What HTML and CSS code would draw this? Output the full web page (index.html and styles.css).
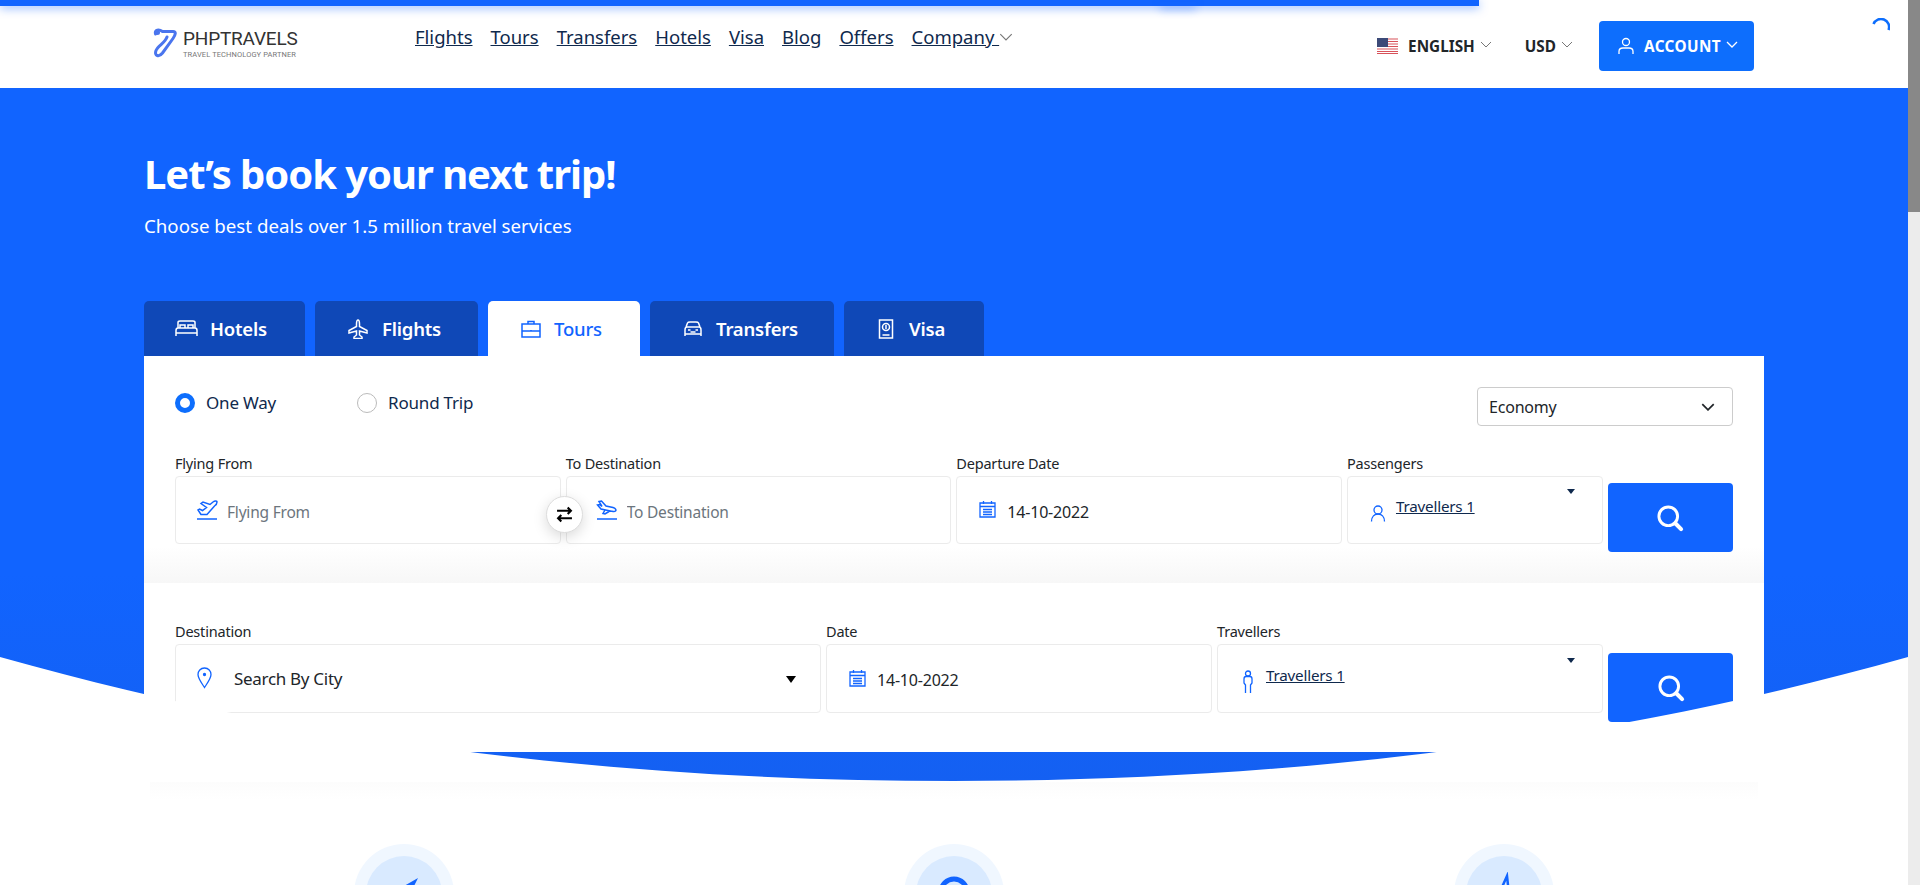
FILE: index.html
```html
<!DOCTYPE html>
<html lang="en">
<head>
  <meta charset="UTF-8" />
  <meta name="viewport" content="width=device-width, initial-scale=1.0"/>
  <title>PHPTRAVELS</title>
  <link rel="stylesheet" href="styles.css">
</head>
<body>

<div class="page">
  <div class="top-line"></div>

  <!-- Header -->
  <header class="site-header">
    <a class="logo" href="#">
      <svg class="logo-mark" viewBox="0 0 24 30"><path d="M2.500 6C1.500 1.500 6 1 9.500 3.500L20 3.500C23.500 3.500 22.500 7 20 10.500L9.500 25C6 29.500 1 28 3 22.500C5 17.500 12 15 14 9" fill="none" stroke="#4a75ee" stroke-width="3" stroke-linecap="round"/><circle cx="4.500" cy="4.500" r="2.500" fill="#4a75ee"/></svg>
      <span class="logo-text">
        <span class="logo-name">PHPTRAVELS</span>
        <span class="logo-sub">TRAVEL TECHNOLOGY PARTNER</span>
      </span>
    </a>

    <nav class="main-nav">
      <a href="#">Flights</a>
      <a href="#">Tours</a>
      <a href="#">Transfers</a>
      <a href="#">Hotels</a>
      <a href="#">Visa</a>
      <a href="#">Blog</a>
      <a href="#">Offers</a>
      <span class="nav-drop"><a href="#">Company&nbsp;</a><svg class="chev" viewBox="0 0 12 7"><path d="M1 1l5 5 5-5"/></svg></span>
    </nav>

    <div class="header-right">
      <div class="drop drop-lang">
        <svg class="flag" viewBox="0 0 21 16">
          <rect width="21" height="16" fill="#fff"/>
          <path d="M0 1h21M0 3.500h21M0 6h21M0 8.500h21M0 11h21M0 13.500h21M0 15.500h21" stroke="#d8525a" stroke-width="1.200"/>
          <rect width="11" height="9" fill="#3c4a78"/>
        </svg>
        <span>ENGLISH</span>
        <svg class="chev" viewBox="0 0 12 7"><path d="M1 1l5 5 5-5"/></svg>
      </div>
      <div class="drop drop-cur">
        <span>USD</span>
        <svg class="chev" viewBox="0 0 12 7"><path d="M1 1l5 5 5-5"/></svg>
      </div>
      <button class="account-btn">
        <svg class="account-icon" viewBox="0 0 16 18"><circle cx="8" cy="5" r="3.500"/><path d="M1 17v-2.500C1 12 3 11 5 11h6c2 0 4 1 4 3.500V17"/></svg>
        <span>ACCOUNT</span>
        <svg class="chev" viewBox="0 0 12 7"><path d="M1 1l5 5 5-5"/></svg>
      </button>
    </div>

    <svg class="spinner" viewBox="0 0 18 13"><path d="M1.500 6A8 8 0 0 1 16.500 12"/></svg>
  </header>

  <!-- Hero and search -->
  <section class="hero">
    <h1>Let’s book your next trip!</h1>
    <p class="hero-sub">Choose best deals over 1.5 million travel services</p>

    <div class="tabs">
      <a class="tab tab-hotels" href="#">
        <svg viewBox="0 0 23 17"><path d="M3 8V2.500C3 1.500 4 1 5 1h13c1 0 2 .5 2 1.500V8M1 16v-5.500C1 9 2 8 3 8h17c1 0 2 1 2 2.500V16M1 13h21M5 8V5h5v3M13 8V5h5v3"/></svg>
        Hotels
      </a>
      <a class="tab tab-flights" href="#">
        <svg viewBox="0 0 20 20"><path d="M10 1c1 0 1.500 2 1.500 4v2.500L19 11.500V14l-7.500-2v4l2.500 2v1.500H6V18l2.500-2v-4L1 14v-2.500L8.500 7.500V5C8.500 3 9 1 10 1z"/></svg>
        Flights
      </a>
      <a class="tab tab-tours active" href="#">
        <svg viewBox="0 0 20 18"><path d="M1 4h18v13H1zM1 11h18M7 4V1.500h6V4M10 10v1.500"/></svg>
        Tours
      </a>
      <a class="tab tab-transfers" href="#">
        <svg viewBox="0 0 20 16"><path d="M3 6l1.500-4C5 1 6 1 7 1h6c1 0 2 0 2.500 1L17 6M2 15v-6c0-2 1-3 2-3h12c1 0 2 1 2 3v6M2 13h16M5 9h2.500M12.500 9H15M7.500 11h5"/></svg>
        Transfers
      </a>
      <a class="tab tab-visa" href="#">
        <svg viewBox="0 0 15 20"><path d="M1 1h13v18H1zM4 16h7"/><circle cx="7.500" cy="8" r="3.500"/><path d="M7.500 6v4"/></svg>
        Visa
      </a>
    </div>

    <div class="search-card">
      <div class="panel panel-flights">
        <div class="trip-row">
          <div class="radios">
            <label class="radio"><span class="radio-dot checked"></span>One Way</label>
            <label class="radio"><span class="radio-dot"></span>Round Trip</label>
          </div>
          <div class="cabin-select">
            <span>Economy</span>
            <svg viewBox="0 0 12 7"><path d="M1 1l5 5 5-5"/></svg>
          </div>
        </div>

        <div class="field-row flights-row">
          <div class="field">
            <label>Flying From</label>
            <div class="box">
              <svg class="ico ico-plane" viewBox="0 0 22 20"><path d="M1 19h20M5 14.500L2 10l1.500-1 3 1.500 4-3L5 3.500 7 2l7 2.500 3-2.500c1.500-1 4-1.500 4 0s-1 3-2.500 4L11 14.500z"/></svg>
              <input type="text" placeholder="Flying From">
            </div>
            <button class="swap"><svg viewBox="0 0 16 16"><path d="M1 4.500h13M11 1.500l3 3-3 3" /><path d="M15 11.500H2M5 8.500l-3 3 3 3"/></svg></button>
          </div>
          <div class="field">
            <label>To Destination</label>
            <div class="box box-to">
              <svg class="ico ico-plane" viewBox="0 0 22 20"><path d="M1 19h20M3 1.500L5.500 1 10 6l7 1.500c2.500.8 3.500 2.500 2.500 3.500s-2.500.5-4 .2L5 9 1.500 5l2-.5L6 6.500zM9 10l-2 3.500L9 14l4-2.500"/></svg>
              <input type="text" placeholder="To Destination">
            </div>
          </div>
          <div class="field">
            <label>Departure Date</label>
            <div class="box box-date">
              <svg class="ico ico-cal" viewBox="0 0 17 18"><path d="M1 3h15v14H1zM1 6.500h15M4.500 1v3M12.500 1v3M4 9.500h9M4 12h9M4 14.500h9" /></svg>
              <span class="value">14-10-2022</span>
            </div>
          </div>
          <div class="field">
            <label>Passengers</label>
            <div class="box box-pax">
              <svg class="ico ico-user" viewBox="0 0 16 18"><circle cx="8" cy="6" r="4"/><path d="M1.500 17.500c0-5 3-7.500 6.500-7.500s6.500 2.500 6.500 7.500"/></svg>
              <a class="pax-link" href="#">Travellers 1</a>
              <span class="caret caret-small"></span>
            </div>
          </div>
          <button class="search-btn"><svg viewBox="0 0 24 24"><circle cx="10.500" cy="10.500" r="8"/><path d="M16.500 16.500l5 5" stroke-width="3.500" stroke-linecap="round"/></svg></button>
        </div>
      </div>

      <div class="panel panel-tours">
        <div class="field-row tours-row">
          <div class="field">
            <label>Destination</label>
            <div class="box box-city">
              <svg class="ico ico-pin" viewBox="0 0 15 22"><path d="M7.500 1C3.500 1 1 4 1 7.500c0 4 4 9 6.500 13 2.500-4 6.500-9 6.500-13C14 4 11.500 1 7.500 1z"/><circle cx="7.500" cy="7.500" r="1" fill="#1164ff"/></svg>
              <span class="city">Search By City</span>
              <span class="caret"></span>
            </div>
          </div>
          <div class="field">
            <label>Date</label>
            <div class="box box-date">
              <svg class="ico ico-cal" viewBox="0 0 17 18"><path d="M1 3h15v14H1zM1 6.500h15M4.500 1v3M12.500 1v3M4 9.500h9M4 12h9M4 14.500h9" /></svg>
              <span class="value">14-10-2022</span>
            </div>
          </div>
          <div class="field">
            <label>Travellers</label>
            <div class="box box-pax box-trav">
              <svg class="ico ico-person" viewBox="0 0 12 24"><circle cx="6" cy="3.500" r="2.500"/><path d="M3.500 23V15L2 13V9c0-1.500 1-2.500 2-2.500h4c1 0 2 1 2 2.500v4l-1.500 2v8"/></svg>
              <a class="pax-link" href="#">Travellers 1</a>
              <span class="caret caret-small"></span>
            </div>
          </div>
          <button class="search-btn"><svg viewBox="0 0 24 24"><circle cx="10.500" cy="10.500" r="8"/><path d="M16.500 16.500l5 5" stroke-width="3.500" stroke-linecap="round"/></svg></button>
        </div>
      </div>
    </div>

    <svg class="hero-curve" viewBox="0 0 1908 125" preserveAspectRatio="none"><path d="M0 0C318 90 636 124 954 124S1590 90 1908 0V125H0z" fill="#fff"/></svg>
  </section>

  <div class="curve-shadow"></div>

  <!-- Features -->
  <section class="features">
    <div class="feature">
      <div class="circle"><div class="circle-in">
        <svg class="feat-ico" viewBox="0 0 40 40"><path d="M34 6L6 22l10 2 3 12z" fill="#1164ff"/></svg>
      </div></div>
    </div>
    <div class="feature">
      <div class="circle"><div class="circle-in">
        <svg class="feat-ico" viewBox="0 0 40 40"><circle cx="20" cy="20" r="13" fill="none" stroke="#1164ff" stroke-width="5"/></svg>
      </div></div>
    </div>
    <div class="feature">
      <div class="circle"><div class="circle-in">
        <svg class="feat-ico" viewBox="0 0 40 40"><path d="M23 4L15 22l2 12h6l2-12z" fill="none" stroke="#1164ff" stroke-width="2.500"/></svg>
      </div></div>
    </div>
  </section>
</div>

<div class="scrollbar"><div class="scroll-thumb"></div></div>

</body>
</html>
```

FILE: styles.css
```css
* { box-sizing: border-box; margin: 0; padding: 0; }
html, body { height: 885px; overflow: hidden; }
body { display: flex; font-family: 'Noto Sans', 'Open Sans', sans-serif; background: #fff; color: #0f294d; }

a { color: inherit; }
svg { display: block; }

.page { position: relative; flex: 1; min-width: 0; height: 885px; overflow: hidden; }
.scrollbar { width: 12px; background: #ececec; }
.scroll-thumb { height: 212px; background: #888; }

.top-line { position: absolute; top: 0; left: 0; width: 1479px; height: 6px; background: #1164ff; box-shadow: 0 2px 10px rgba(17,100,255,0.5); z-index: 5; }
.top-line::after { content: ""; position: absolute; top: 2px; left: 1160px; width: 36px; height: 4px; box-shadow: 0 3px 8px rgba(17,100,255,0.45); }

/* Header */
.site-header { position: relative; display: flex; height: 88px; padding-left: 153px; background: #fff; }

.logo { display: flex; width: 145px; height: 30px; margin-top: 28px; color: #333; text-decoration: none; font-family: Roboto, sans-serif; }
.logo-mark { width: 24px; height: 30px; margin-right: 6px; flex: none; }
.logo-text { display: flex; flex-direction: column; }
.logo-name { font-size: 19px; line-height: 21px; letter-spacing: -0.2px; white-space: nowrap; }
.logo-sub { margin-top: 1px; font-size: 7.500px; line-height: 9px; color: #777; white-space: nowrap; letter-spacing: 0.1px; }

.main-nav { display: flex; gap: 18px; margin-left: 117px; margin-top: 24px; height: 26px; font-size: 18.500px; line-height: 26px; }
.nav-drop { display: flex; align-items: center; }
.chev { width: 12px; height: 7px; fill: none; stroke: #777; stroke-width: 1; }
.nav-drop .chev { margin-left: 0; width: 14px; height: 8px; }

.header-right { display: flex; align-items: center; height: 50px; margin: 21px 154px 0 auto; font-size: 15.300px; font-weight: 700; color: #212529; }
.drop { display: flex; align-items: center; }
.drop .chev { margin-left: 5px; margin-top: -3px; }
.drop-lang { margin-right: 33px; }
.drop-cur { margin-right: 26px; }
.flag { width: 21px; height: 16px; margin-right: 10px; }
.account-btn { display: flex; align-items: center; width: 155px; height: 50px; padding-left: 19px; background: #0d6efd; color: #fff; border: none; border-radius: 4px; font: inherit; letter-spacing: 0.4px; cursor: pointer; }
.account-icon { width: 16px; height: 18px; margin-right: 10px; fill: none; stroke: #fff; stroke-width: 1.300; }
.account-btn .chev { margin-left: 5px; margin-top: -3px; stroke: #fff; stroke-width: 1.300; }

.spinner { position: absolute; top: 18px; right: 18px; width: 18px; height: 13px; fill: none; stroke: #0d6efd; stroke-width: 2.500; }

/* Hero */
.hero { position: relative; height: 694px; padding: 0 144px; background: linear-gradient(#1164ff 70%, #1460f2); color: #fff; }
.hero h1 { padding-top: 58px; font-size: 40px; line-height: 56px; font-weight: 700; letter-spacing: -1.050px; }
.hero-sub { margin-top: 11px; font-size: 18.700px; line-height: 26px; }

.tabs { display: flex; gap: 10px; height: 55px; margin-top: 62px; }
.tab { display: flex; align-items: center; padding: 0 31px; background: #0f48b7; color: #fff; border-radius: 5px 5px 0 0; font-size: 18.500px; font-weight: 600; text-decoration: none; letter-spacing: -0.2px; }
.tab svg { height: 20px; margin-right: 12px; fill: none; stroke: #fff; stroke-width: 1.500; }
.tab.active { background: #fff; color: #1164ff; font-weight: 500; }
.tab.active svg { stroke: #1164ff; }
.tab-hotels { width: 161px; }
.tab-hotels svg { width: 23px; height: 17px; }
.tab-flights { width: 163px; padding-left: 33px; }
.tab-flights svg { width: 20px; margin-right: 14px; }
.tab-tours { width: 152px; padding-left: 33px; }
.tab-tours svg { width: 20px; height: 18px; margin-right: 13px; }
.tab-transfers { width: 184px; padding-left: 33px; }
.tab-transfers svg { width: 20px; height: 16px; margin-right: 13px; }
.tab-visa { width: 140px; padding-left: 34px; }
.tab-visa svg { width: 16px; margin-right: 15px; }

/* Search card */
.search-card { color: #0f294d; }
.panel { padding: 31px 31px 0; }
.panel-flights { height: 227px; background: linear-gradient(#fff 84%, #f7f7f7); }
.panel-tours { height: 169px; padding-top: 38px; background: #fff; }

.trip-row { display: flex; justify-content: space-between; height: 39px; margin-bottom: 27px; }
.radios { display: flex; gap: 81px; padding-top: 6px; }
.radio { display: flex; align-items: center; height: 19px; font-size: 17px; letter-spacing: -0.2px; }
.radio-dot { width: 20px; height: 20px; margin-right: 11px; border: 1px solid #bbb; border-radius: 50%; background: #fff; }
.radio-dot.checked { border: 5.500px solid #0d6efd; }

.cabin-select { display: flex; align-items: center; justify-content: space-between; width: 256px; padding: 0 17px 0 11px; border: 1px solid #ccc; border-radius: 4px; font-size: 16px; color: #212529; letter-spacing: -0.2px; }
.cabin-select svg { width: 14px; height: 8px; fill: none; stroke: #212529; stroke-width: 1.500; }

.field-row { display: grid; gap: 5px; }
.flights-row { grid-template-columns: 1fr 1fr 1fr 256px 125px; }
.tours-row { grid-template-columns: 1fr 386px 386px 125px; }

.field { position: relative; min-width: 0; }
.field label { display: block; height: 23px; font-size: 14.500px; line-height: 20px; letter-spacing: -0.2px; color: #212529; }
.box { display: flex; align-items: center; height: 68px; padding-left: 20px; background: #fff; border: 1px solid #ebebeb; border-radius: 4px; }
.tours-row .box { height: 69px; }
.box input { flex: 1; min-width: 0; margin-top: 3px; border: none; outline: none; background: transparent; font: inherit; font-size: 15.500px; letter-spacing: -0.2px; }
.box input::placeholder { color: #6c757d; opacity: 1; }
.value { margin-top: 3px; font-size: 16px; letter-spacing: -0.2px; color: #212529; }

.ico { flex: none; margin-right: 9px; fill: none; stroke: #1164ff; stroke-width: 1.300; }
.ico-plane { width: 22px; height: 20px; stroke-width: 1.500; }
.ico-cal { width: 17px; height: 18px; margin-right: 11px; margin-top: -2px; }
.box-date { padding-left: 22px; }
.ico-user { width: 16px; height: 18px; margin-top: 6px; margin-right: 10px; }
.ico-pin { width: 15px; height: 22px; margin-right: 22px; margin-left: 1px; margin-top: -1px; }
.ico-person { width: 12px; height: 24px; margin-right: 12px; margin-left: 4px; margin-top: 6px; }
.box-to { padding-left: 29px; }
.box-pax { position: relative; padding-left: 22px; }
.box-city { position: relative; }
.pax-link { align-self: flex-start; margin-top: 18px; font-size: 15.200px; letter-spacing: -0.2px; line-height: 22px; }
.box-trav { padding-left: 20px; }
.box-trav .pax-link { margin-top: 19px; }
.city { font-size: 17px; letter-spacing: -0.3px; color: #212529; }

.caret { position: absolute; right: 23px; top: 32px; border-left: 6px solid transparent; border-right: 6px solid transparent; border-top: 7px solid #000; }
.box-city { padding-right: 30px; }
.box-city .caret { right: 24px; top: 31px; border-left-width: 5px; border-right-width: 5px; }
.caret-small { top: 12px; right: 27px; border-left-width: 4px; border-right-width: 4px; border-top-width: 5px; border-top-color: #0f294d; }
.box-trav .caret-small { top: 13px; }

.swap { position: absolute; top: 43px; right: -22px; display: flex; align-items: center; justify-content: center; width: 37px; height: 37px; background: #fff; border: 1px solid #ddd; border-radius: 50%; box-shadow: 0 4px 14px rgba(0,0,0,0.15); z-index: 2; }
.swap svg { width: 17px; height: 17px; fill: none; stroke: #000; stroke-width: 2; }

.search-btn { display: flex; align-items: center; justify-content: center; align-self: end; height: 69px; margin-bottom: -8px; background: #1164ff; border: none; border-radius: 4px; cursor: pointer; }
.tours-row .search-btn { margin-bottom: -9px; }
.search-btn svg { width: 28px; height: 28px; fill: none; stroke: #fff; stroke-width: 2.500; }

/* Curved bottom of the hero, sits over the card */
.hero-curve { position: absolute; left: 0; bottom: 0; width: 100%; height: 125px; z-index: 3; }

.curve-shadow { height: 18px; margin: 0 150px; background: linear-gradient(#fcfcfc, #fff); }

/* Features */
.features { display: grid; grid-template-columns: repeat(3, 550px); justify-content: center; margin-top: 44px; }
.feature { display: flex; justify-content: center; }
.circle { width: 100px; height: 100px; padding: 12px; background: #f0f7ff; border-radius: 50%; }
.circle-in { display: flex; justify-content: center; padding-top: 16px; height: 76px; background: #d9eaff; border-radius: 50%; }
.feat-ico { width: 40px; height: 40px; }
```
